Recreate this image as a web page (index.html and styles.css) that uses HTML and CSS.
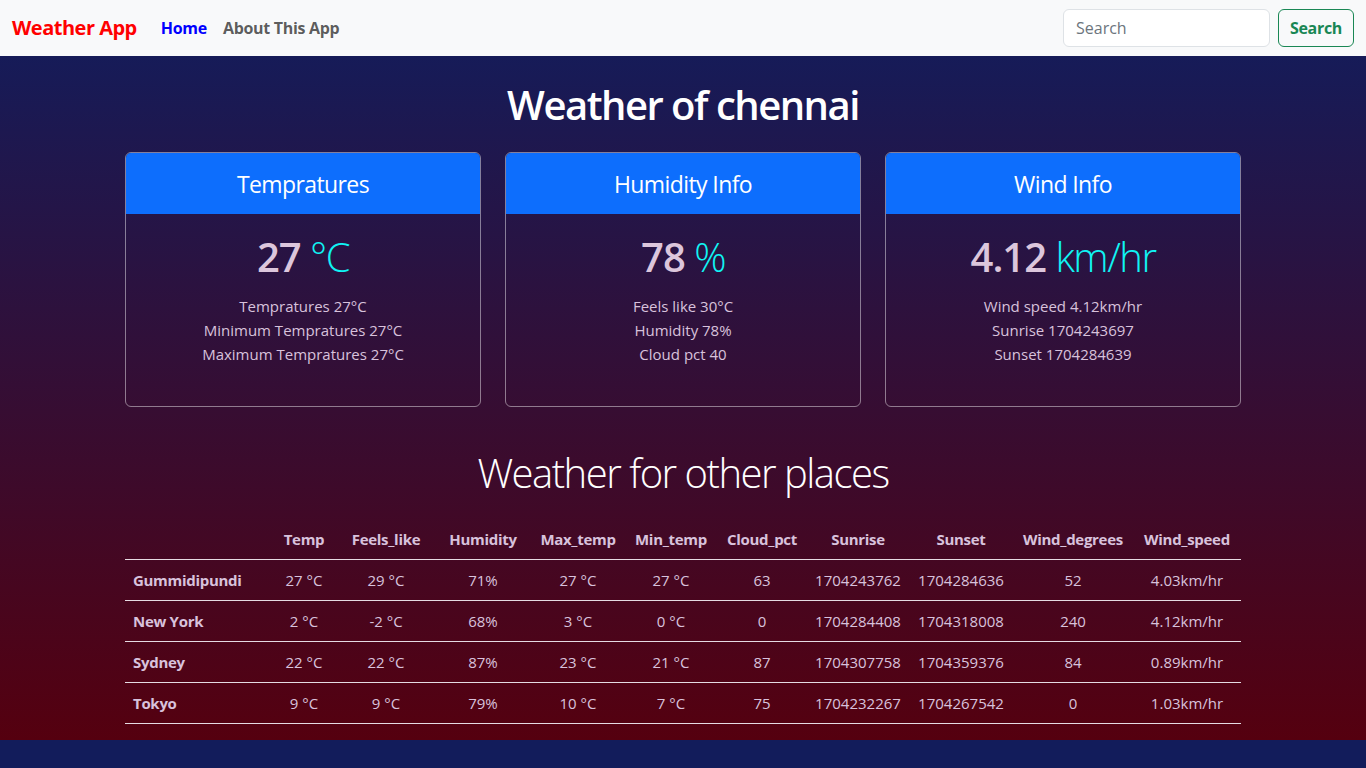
FILE: index.html
```html
<!DOCTYPE html>
<html lang="en">
<head>
<meta charset="utf-8">
<title>Weather App</title>
<link rel="stylesheet" href="styles.css">
</head>
<body>
<nav class="navbar">
  <div class="nav-left">
    <a class="brand" href="#">Weather App</a>
    <a class="nav-link active" href="#">Home</a>
    <a class="nav-link" href="#">About This App</a>
  </div>
  <form class="search">
    <input class="search-input" type="search" placeholder="Search">
    <button class="search-btn" type="button">Search</button>
  </form>
</nav>
<main class="main">
  <div class="container">
    <h1 class="title">Weather of chennai</h1>
    <div class="cards">
      <div class="card">
        <div class="card-header">Tempratures</div>
        <div class="card-body">
          <div class="big"><span class="num">27</span> <span class="unit">°C</span></div>
          <ul class="lines">
            <li>Tempratures 27°C</li>
            <li>Minimum Tempratures 27°C</li>
            <li>Maximum Tempratures 27°C</li>
          </ul>
        </div>
      </div>
      <div class="card">
        <div class="card-header">Humidity Info</div>
        <div class="card-body">
          <div class="big"><span class="num">78</span> <span class="unit">%</span></div>
          <ul class="lines">
            <li>Feels like 30°C</li>
            <li>Humidity 78%</li>
            <li>Cloud pct 40</li>
          </ul>
        </div>
      </div>
      <div class="card">
        <div class="card-header">Wind Info</div>
        <div class="card-body">
          <div class="big"><span class="num">4.12</span> <span class="unit">km/hr</span></div>
          <ul class="lines">
            <li>Wind speed 4.12km/hr</li>
            <li>Sunrise 1704243697</li>
            <li>Sunset 1704284639</li>
          </ul>
        </div>
      </div>
    </div>
    <h2 class="subtitle">Weather for other places</h2>
    <table class="table">
      <colgroup>
        <col class="c0"><col class="c1"><col class="c2"><col class="c3"><col class="c4"><col class="c5"><col class="c6"><col class="c7"><col class="c8"><col class="c9"><col class="c10">
      </colgroup>
      <thead>
        <tr><th></th><th>Temp</th><th>Feels_like</th><th>Humidity</th><th>Max_temp</th><th>Min_temp</th><th>Cloud_pct</th><th>Sunrise</th><th>Sunset</th><th>Wind_degrees</th><th>Wind_speed</th></tr>
      </thead>
      <tbody>
        <tr><th class="place">Gummidipundi</th><td>27 °C</td><td>29 °C</td><td>71%</td><td>27 °C</td><td>27 °C</td><td>63</td><td>1704243762</td><td>1704284636</td><td>52</td><td>4.03km/hr</td></tr>
        <tr><th class="place">New York</th><td>2 °C</td><td>-2 °C</td><td>68%</td><td>3 °C</td><td>0 °C</td><td>0</td><td>1704284408</td><td>1704318008</td><td>240</td><td>4.12km/hr</td></tr>
        <tr><th class="place">Sydney</th><td>22 °C</td><td>22 °C</td><td>87%</td><td>23 °C</td><td>21 °C</td><td>87</td><td>1704307758</td><td>1704359376</td><td>84</td><td>0.89km/hr</td></tr>
        <tr><th class="place">Tokyo</th><td>9 °C</td><td>9 °C</td><td>79%</td><td>10 °C</td><td>7 °C</td><td>75</td><td>1704232267</td><td>1704267542</td><td>0</td><td>1.03km/hr</td></tr>
      </tbody>
    </table>
  </div>
</main>
</body>
</html>
```

FILE: styles.css
```css
* { box-sizing: border-box; }

html, body {
  margin: 0;
  padding: 0;
}

body {
  font-family: "Open Sans", "Noto Sans", "Liberation Sans", sans-serif;
  font-size: 16px;
  line-height: 1.5;
  background: #121c5b;
  color: #212529;
  min-height: 768px;
}

a { text-decoration: none; }

.navbar {
  height: 56px;
  background: #f8f9fa;
  display: flex;
  align-items: center;
  justify-content: space-between;
  padding: 0 12px;
}

.nav-left {
  display: flex;
  align-items: center;
}

.brand {
  color: #ff0000;
  font-weight: 700;
  font-size: 20px;
  line-height: 30px;
  margin-right: 16px;
  letter-spacing: -0.5px;
}

.nav-link {
  font-weight: 700;
  font-size: 16px;
  color: rgba(0, 0, 0, 0.65);
  padding: 8px;
  letter-spacing: -0.3px;
}

.nav-link.active { color: #0000ff; }

.search {
  display: flex;
  align-items: center;
  gap: 8px;
  margin: 0;
}

.search-input {
  width: 207px;
  height: 38px;
  border: 1px solid #dee2e6;
  border-radius: 6px;
  background: #fff;
  padding: 6px 12px;
  font-family: inherit;
  font-size: 16px;
  color: #212529;
  outline: none;
}

.search-input::placeholder { color: #6c757d; }

.search-btn {
  width: 76px;
  height: 38px;
  border: 1px solid #198754;
  border-radius: 6px;
  background: transparent;
  color: #198754;
  font-family: inherit;
  font-weight: 700;
  font-size: 16px;
  letter-spacing: -0.3px;
  padding: 0;
}

.main {
  background: linear-gradient(to bottom, #161b58 0%, #55000f 100%);
  padding: 25px 0 16px;
}

.container {
  width: 1116px;
  margin: 0 auto;
}

.title {
  margin: 0;
  text-align: center;
  color: #fff;
  font-size: 40px;
  font-weight: 600;
  line-height: 48px;
  letter-spacing: -1.5px;
}

.cards {
  margin-top: 23px;
  display: grid;
  grid-template-columns: repeat(3, 1fr);
  gap: 24px;
}

.card {
  border: 1px solid rgba(255, 255, 255, 0.45);
  border-radius: 6px;
  overflow: hidden;
  height: 255px;
  display: flex;
  flex-direction: column;
}

.card-header {
  background: #0d6efd;
  color: #fff;
  text-align: center;
  font-size: 23px;
  line-height: 29px;
  padding: 17px 16px 15px;
  height: 61px;
  letter-spacing: -0.6px;
}

.card-body {
  padding: 16px;
  text-align: center;
  color: thistle;
}

.big {
  font-size: 40px;
  line-height: 53px;
  margin-bottom: 11px;
  letter-spacing: -1px;
}

.num {
  font-weight: 600;
  color: #dcc6dc;
}

.unit {
  color: #10f4f4;
  font-weight: 300;
  letter-spacing: -1.5px;
}

.lines {
  list-style: none;
  margin: 0;
  padding: 0;
  font-size: 15px;
  line-height: 24px;
  color: #d8c2dc;
}

.subtitle {
  margin: 42px 0 22px;
  text-align: center;
  color: #fff;
  font-size: 40px;
  font-weight: 300;
  line-height: 48px;
  letter-spacing: -1.5px;
}

.table {
  width: 100%;
  border-collapse: collapse;
  table-layout: fixed;
  color: #d8c2dc;
  font-size: 15px;
}

.c0 { width: 146px; }
.c1 { width: 66px; }
.c2 { width: 98px; }
.c3 { width: 96px; }
.c4 { width: 94px; }
.c5 { width: 92px; }
.c6 { width: 90px; }
.c7 { width: 102px; }
.c8 { width: 104px; }
.c9 { width: 120px; }
.c10 { width: 108px; }

.table th,
.table td {
  padding: 8px 4px;
  line-height: 24px;
  text-align: center;
  border-bottom: 1px solid #e6dbe3;
  white-space: nowrap;
}

.table th {
  font-weight: 700;
  letter-spacing: -0.3px;
}

.table th.place {
  text-align: left;
  padding-left: 8px;
}
```
